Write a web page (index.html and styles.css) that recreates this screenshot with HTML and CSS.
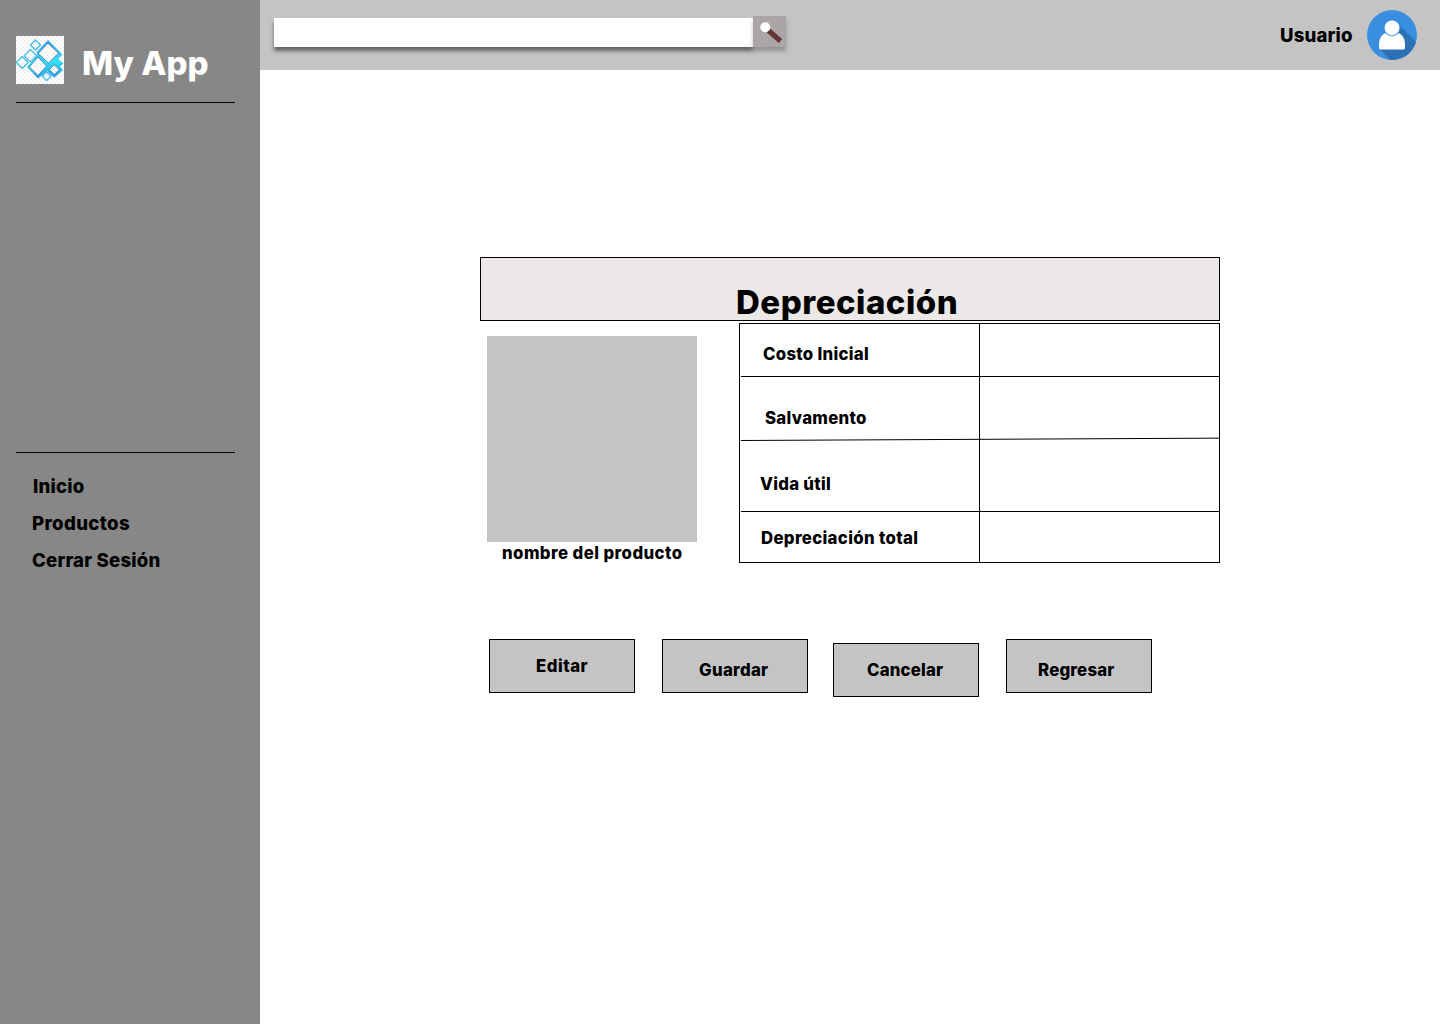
FILE: index.html
```html
<!DOCTYPE html>
<html lang="es">
<head>
<meta charset="utf-8">
<title>My App - Depreciación</title>
<link rel="stylesheet" href="styles.css">
</head>
<body>
<div class="app">
  <aside class="sidebar">
    <div class="brand">
      <svg class="logo" width="48" height="48" viewBox="0 0 48 48">
        <defs>
          <pattern id="check" width="4" height="4" patternUnits="userSpaceOnUse">
            <rect width="4" height="4" fill="#fff"/>
            <path d="M0 0h2v2H0zM2 2h2v2H2z" fill="#f1f1f1"/>
          </pattern>
          <linearGradient id="blue" gradientUnits="userSpaceOnUse" x1="32" y1="4" x2="34" y2="44">
            <stop offset="0" stop-color="#3b9df0"/>
            <stop offset=".55" stop-color="#35dff5"/>
            <stop offset="1" stop-color="#2a8ce8"/>
          </linearGradient>
        </defs>
        <rect width="48" height="48" fill="url(#check)"/>
        <path d="M32 4L46.500 18.500L42 23L47.500 27.500L44 30.500L47 34L38.500 41.500L34 38L31 35L22 42.500L11 31L21 19L20.500 16Z" fill="url(#blue)"/>
        <g fill="url(#check)" stroke="#45bde9" stroke-width="1.300" stroke-linejoin="round">
          <path d="M19.500 4l5 5-5 5-5-5zM14.500 13.500l6.200 6.200-6.200 6.200-6.200-6.200zM6.300 20.500l6 6-6 6-6-6zM30.700 36l4.300 4.300-4.300 4.300-4.300-4.300z"/>
        </g>
        <g fill="url(#check)" stroke="#28708f" stroke-width=".7" stroke-linejoin="round">
          <path d="M32 7L42.500 17.300L32.500 27L22.300 17.500zM22 21L30.500 30L22 39.500L13.300 31zM38.300 28.800l4.900 4.900-4.900 4.900-4.900-4.900z"/>
        </g>
      </svg>
      <span class="brand-name">My App</span>
    </div>
    <nav class="menu">
      <a class="menu-inicio">Inicio</a>
      <a class="menu-productos">Productos</a>
      <a class="menu-salir">Cerrar Sesión</a>
    </nav>
  </aside>
  <div class="page">
    <header class="topbar">
      <div class="search">
        <div class="search-field"></div>
        <div class="search-button">
          <svg width="33" height="31" viewBox="0 0 33 31">
            <path d="M15.500 14.500L27.500 25" stroke="#623436" stroke-width="5"/>
            <circle cx="12.300" cy="11.300" r="5" fill="#fff"/>
          </svg>
        </div>
      </div>
      <div class="user">
        <span class="user-name">Usuario</span>
        <svg width="50" height="50" viewBox="0 0 50 50">
          <defs><clipPath id="disc"><circle cx="25" cy="25" r="25"/></clipPath></defs>
          <circle cx="25" cy="25" r="25" fill="#3a8ee0"/>
          <path d="M30 13L55 38V56H29L12.500 38.500Z" fill="#2d71b5" clip-path="url(#disc)"/>
          <path d="M18.500 23C14 25 12 29.500 12 35v2.200c0 1.500 .8 2.300 2.300 2.300h21.400c1.500 0 2.300-.8 2.300-2.300V35c0-5.500-2-10-6.500-12z" fill="#fff"/>
          <circle cx="25" cy="17.800" r="8.500" fill="#3a8ee0"/>
          <circle cx="25" cy="17.800" r="7.400" fill="#fff"/>
        </svg>
      </div>
    </header>
    <main class="content">
      <h1 class="title"><span>Depreciación</span></h1>
      <section class="detail">
        <figure class="product">
          <div class="product-image"></div>
          <figcaption>nombre del producto</figcaption>
        </figure>
        <div class="table">
          <div class="cell label costo"><span>Costo Inicial</span></div><div class="cell"></div>
          <div class="cell label salvamento"><span>Salvamento</span></div><div class="cell open"></div>
          <div class="cell label vida"><span>Vida útil</span></div><div class="cell"></div>
          <div class="cell label total"><span>Depreciación total</span></div><div class="cell open"></div>
          <svg class="slant" width="478" height="4" viewBox="0 0 478 4"><path d="M0 3.500L478 1.150" stroke="#000"/></svg>
        </div>
      </section>
      <div class="actions">
        <button class="editar"><span>Editar</span></button>
        <button class="guardar"><span>Guardar</span></button>
        <button class="cancelar"><span>Cancelar</span></button>
        <button class="regresar"><span>Regresar</span></button>
      </div>
    </main>
  </div>
</div>
</body>
</html>
```
FILE: styles.css
```css
* { box-sizing: border-box; }
body { margin: 0; background: #fff; color: #000; font: 800 16.8px/24px Inter, sans-serif; }
svg { display: block; }
span, a, figcaption { white-space: nowrap; }
.app { display: flex; height: 1024px; overflow: hidden; }

.sidebar { width: 260px; background: #878787; padding: 36px 25px 0 16px; }
.brand { display: flex; height: 67px; border-bottom: 1px solid #000; }
.brand-name { margin-left: 18px; color: #fff; font-size: 33px; line-height: 54px; }
.menu { display: flex; flex-direction: column; margin-top: 349px; padding: 15px 0 0 16px; border-top: 1px solid #000; font-size: 18.6px; line-height: 37px; letter-spacing: .2px; }
.menu-inicio { padding-left: 1px; }
.menu-productos { letter-spacing: .35px; }

.page { flex: 1; }
.topbar { display: flex; justify-content: space-between; height: 70px; padding: 10px 23px 0 14px; background: #c4c4c4; }
.search { display: flex; padding-top: 6px; }
.search-field { width: 479px; height: 29px; margin-top: 2px; background: #fff; box-shadow: 0 4px 4px rgba(0, 0, 0, .5); }
.search-button { width: 33px; height: 31px; background: #aca5a5; box-shadow: 0 4px 4px rgba(0, 0, 0, .25); }
.user { display: flex; }
.user-name { width: 87px; font-size: 18.6px; line-height: 50px; letter-spacing: .15px; }

.content { padding: 187px 0 0 220px; }
.title { width: 740px; height: 64px; margin: 0; padding: 20px 0 0 255px; border: 1px solid #000; background: #ece8e8; font-size: 33px; font-weight: 800; line-height: 48px; letter-spacing: .5px; }
.detail { display: flex; width: 740px; padding-top: 2px; }
.product { width: 259px; margin: 0; padding: 13px 0 0 7px; }
.product-image { width: 210px; height: 206px; background: #c4c4c4; }
.product figcaption { padding-left: 15px; line-height: 22px; letter-spacing: .42px; }
.table { position: relative; display: grid; grid-template-columns: 239px 239px; grid-template-rows: 53px 63px 72px 50px; width: 481px; height: 240px; padding-left: 1px; border: 1px solid #000; letter-spacing: .28px; }
.cell { border-bottom: 1px solid #000; }
.label { border-right: 1px solid #000; }
.salvamento, .total, .open { border-bottom: 0; }
.costo { padding: 18px 0 0 22px; }
.salvamento { padding: 29px 0 0 24px; }
.vida { padding: 32px 0 0 19px; }
.total { padding: 14px 0 0 20px; letter-spacing: .33px; }
.slant { position: absolute; left: 1px; top: 113px; }

.actions { display: flex; align-items: flex-start; padding: 75px 0 0 9px; }
button { width: 146px; height: 54px; margin: 0; padding: 0; border: 1px solid #000; background: #c4c4c4; color: #000; font: inherit; letter-spacing: .2px; text-align: left; }
button span { display: block; }
.editar { padding: 0 0 0 46px; letter-spacing: .5px; }
.guardar { margin-left: 27px; padding: 8px 0 0 36px; letter-spacing: .3px; }
.cancelar { margin: 4px 0 0 25px; padding: 0 0 0 33px; }
.regresar { margin-left: 27px; padding: 8px 0 0 31px; }
```
